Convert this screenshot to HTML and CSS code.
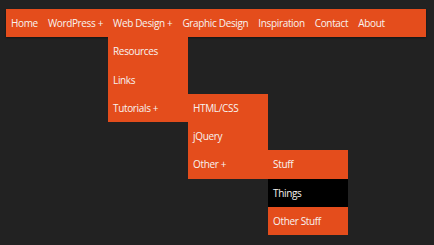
FILE: index.html
```html
<!DOCTYPE html>
<html lang="en">
  <head>
    <meta charset="UTF-8" />
    <meta name="viewport" content="width=device-width, initial-scale=1.0" />
    <title>Dropdown Menu</title>
    <link rel="stylesheet" href="styles.css">
  </head>
  <body>
    <nav class="menu">
      <ul class="menu-bar">
        <li><a href="#">Home</a></li>
        <li><a href="#">WordPress +</a></li>
        <li class="open">
          <a href="#">Web Design +</a>
          <ul class="sub">
            <li><a href="#">Resources</a></li>
            <li><a href="#">Links</a></li>
            <li class="open">
              <a href="#">Tutorials +</a>
              <ul class="sub side">
                <li><a href="#">HTML/CSS</a></li>
                <li><a href="#">jQuery</a></li>
                <li class="open">
                  <a href="#">Other +</a>
                  <ul class="sub side">
                    <li><a href="#">Stuff</a></li>
                    <li class="hover"><a href="#">Things</a></li>
                    <li><a href="#">Other Stuff</a></li>
                  </ul>
                </li>
              </ul>
            </li>
          </ul>
        </li>
        <li><a href="#">Graphic Design</a></li>
        <li><a href="#">Inspiration</a></li>
        <li><a href="#">Contact</a></li>
        <li><a href="#">About</a></li>
      </ul>
    </nav>
  </body>
</html>
```

FILE: styles.css
```css
html,
body {
  margin: 0;
  background: #222222;
  font-family: "Open Sans", "Liberation Sans", sans-serif;
}

body {
  box-sizing: border-box;
  min-height: 100vh;
  padding: 9px 6px;
}

.menu ul {
  list-style: none;
  margin: 0;
  padding: 0;
}

.menu-bar {
  display: flex;
  width: 420px;
  background: #e44d1c;
  box-shadow: 0 1px 2px rgba(0, 0, 0, 0.4);
}

.menu li {
  position: relative;
  background: #e44d1c;
}

.menu a {
  display: block;
  padding: 0 5px;
  line-height: 28.25px;
  font-size: 10px;
  letter-spacing: -0.35px;
  color: #f7f3f0;
  text-decoration: none;
  white-space: nowrap;
}

.menu li.hover {
  background: #000;
}

.sub {
  position: absolute;
  top: 100%;
  left: 0;
  width: 80px;
}

.sub.side {
  top: 0;
  left: 100%;
}
```
